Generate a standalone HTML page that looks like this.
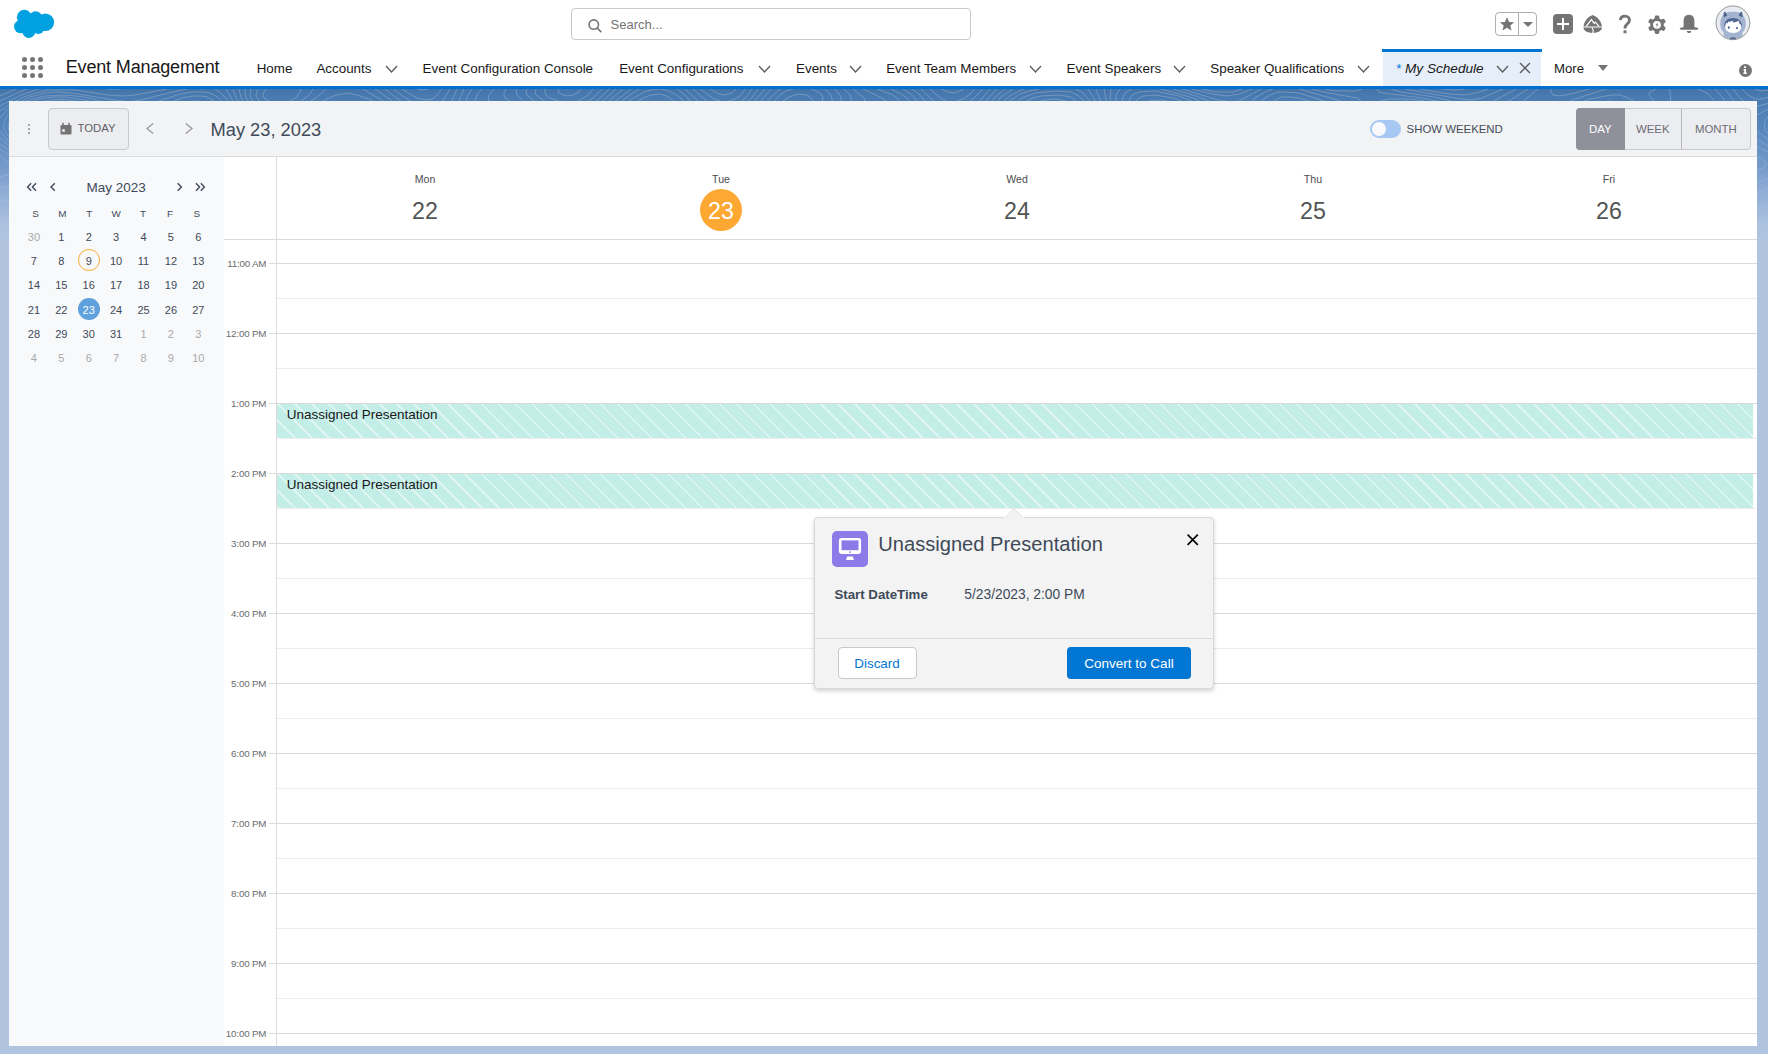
<!DOCTYPE html>
<html><head><meta charset="utf-8">
<style>
*{box-sizing:border-box;margin:0;padding:0}
html,body{width:1768px;height:1054px;overflow:hidden;background:#b0c4df;font-family:"Liberation Sans",sans-serif;color:#181818}
.abs{position:absolute}
svg.abs{overflow:visible}
.t{position:absolute;white-space:nowrap;line-height:1}
</style></head><body>
<div class="abs" style="left:0px;top:0px;width:1768px;height:86px;background:#fff"></div>
<svg class="abs" style="left:0px;top:0px" width="70" height="48" viewBox="0 0 70 48"><g fill="#00a1e0"><circle cx="24.3" cy="17.2" r="7.4"/><circle cx="35.6" cy="17.6" r="6.4"/><circle cx="45.3" cy="22.2" r="8.8"/><circle cx="20.6" cy="26.6" r="6.6"/><circle cx="28.8" cy="31.4" r="6.5"/><circle cx="38.4" cy="28.2" r="5.8"/><rect x="20" y="17" width="26" height="14"/></g></svg>
<div class="abs" style="left:571px;top:8px;width:400px;height:32px;border:1px solid #c9c9c9;border-radius:4px;background:#fff"></div>
<svg class="abs" style="left:586px;top:17px" width="18" height="18" viewBox="0 0 18 18"><circle cx="7.8" cy="7.6" r="4.7" fill="none" stroke="#747474" stroke-width="1.6"/><line x1="11.2" y1="11" x2="14.8" y2="14.6" stroke="#747474" stroke-width="1.7" stroke-linecap="round"/></svg>
<div class="t" style="left:610.60px;top:17.90px;font-size:13px;color:#747474;font-weight:400;font-style:normal;">Search...</div>
<div class="abs" style="left:1495px;top:12px;width:42px;height:24px;border:1px solid #b0adab;border-radius:4px;background:#fff"></div>
<div class="abs" style="left:1518px;top:13px;width:1px;height:22px;background:#b0adab"></div>
<svg class="abs" style="left:1499px;top:16px" width="16" height="16" viewBox="0 0 16 16"><polygon fill="#747474" points="8,1.2 10.1,5.9 15.1,6.2 11.3,9.5 12.5,14.5 8,11.8 3.5,14.5 4.7,9.5 0.9,6.2 5.9,5.9"/></svg>
<svg class="abs" style="left:1522px;top:21px" width="12" height="7" viewBox="0 0 12 7"><polygon fill="#747474" points="1,1 11,1 6,6"/></svg>
<div class="abs" style="left:1553px;top:14px;width:20px;height:20px;background:#747474;border-radius:4px"></div>
<div class="abs" style="left:1557px;top:23px;width:12px;height:2px;background:#fff"></div>
<div class="abs" style="left:1562px;top:18px;width:2px;height:12px;background:#fff"></div>
<svg class="abs" style="left:1583px;top:14px" width="20" height="20" viewBox="0 0 20 20"><path fill="#747474" d="M0.6,12.6 C0.8,8 4,3.2 9.6,1 C15.4,3.2 18.6,8 18.8,12.6 Z"/><path fill="#747474" d="M0.4,13.6 L19,13.6 C18.8,16.8 15,19 9.7,19 C4.4,19 0.6,16.8 0.4,13.6 Z"/><path fill="none" stroke="#fff" stroke-width="1.2" stroke-linejoin="miter" d="M3.2,12.4 L8.4,5.6 L11.2,9.4 L12.4,8.2 L16,12.4"/><path fill="none" stroke="#fff" stroke-width="1.1" d="M8.9,13.6 L10.3,16.3 L9.6,19.2"/></svg>
<svg class="abs" style="left:1617px;top:14px" width="16" height="20" viewBox="0 0 16 20"><path fill="none" stroke="#747474" stroke-width="2.9" stroke-linecap="butt" d="M3.4,6.2 C3.6,3.3 5.6,2.1 8,2.1 C10.6,2.1 12.5,3.8 12.5,6.1 C12.5,8.4 11,9.3 9.6,10.6 C8.5,11.6 8,12.6 8,14.4"/><rect x="6.5" y="16.3" width="3" height="3" rx="0.6" fill="#747474"/></svg>
<svg class="abs" style="left:1647px;top:15px" width="20" height="20" viewBox="0 0 20 20"><g fill="#747474"><circle cx="10" cy="9.8" r="6.8"/><rect x="7.7" y="0.6" width="4.6" height="4.2" rx="1.4" transform="rotate(0 10 9.8)"/><rect x="7.7" y="0.6" width="4.6" height="4.2" rx="1.4" transform="rotate(60 10 9.8)"/><rect x="7.7" y="0.6" width="4.6" height="4.2" rx="1.4" transform="rotate(120 10 9.8)"/><rect x="7.7" y="0.6" width="4.6" height="4.2" rx="1.4" transform="rotate(180 10 9.8)"/><rect x="7.7" y="0.6" width="4.6" height="4.2" rx="1.4" transform="rotate(240 10 9.8)"/><rect x="7.7" y="0.6" width="4.6" height="4.2" rx="1.4" transform="rotate(300 10 9.8)"/></g><circle cx="10" cy="9.8" r="3.9" fill="#fff"/><path fill="#747474" d="M10.7,7.2 L8.6,10.3 L10,10.3 L9.3,12.6 L11.5,9.5 L10.1,9.5 Z"/></svg>
<svg class="abs" style="left:1679px;top:14px" width="20" height="20" viewBox="0 0 20 20"><path fill="#747474" d="M10,0.8 C6.2,0.8 4.6,3.6 4.6,7 L4.6,12.2 C4.6,13 4,13.3 2.6,13.6 C1.3,13.9 0.8,14.3 0.8,14.8 C0.8,15.4 1.3,15.7 2.2,15.7 L17.8,15.7 C18.7,15.7 19.2,15.4 19.2,14.8 C19.2,14.3 18.7,13.9 17.4,13.6 C16,13.3 15.4,13 15.4,12.2 L15.4,7 C15.4,3.6 13.8,0.8 10,0.8 Z"/><path fill="#747474" d="M7.8,17 L12.2,17 C12,18.4 11.2,19 10,19 C8.8,19 8,18.4 7.8,17 Z"/></svg>
<svg class="abs" style="left:1715px;top:5px" width="36" height="36" viewBox="0 0 36 36"><defs><clipPath id="avc"><circle cx="17.9" cy="17.8" r="16.4"/></clipPath></defs><circle cx="17.9" cy="17.8" r="16.9" fill="#e8ecf2" stroke="#8a8a8a" stroke-width="0.9"/><g clip-path="url(#avc)"><path fill="#a3b4d1" d="M8.6,27.5 C6.5,25.5 5.2,22.5 5.2,18.8 C5.2,14 7,10.5 9.8,8.4 C12.4,7.2 15,6.8 18,6.8 C21,6.8 23.6,7.2 26.2,8.4 C29,10.5 30.8,14 30.8,18.8 C30.8,22.5 29.5,25.5 27.4,27.5 L27.6,36 L8.4,36 Z"/><path fill="#4f6792" d="M8.6,12.2 C8.2,9.5 8.6,7.5 9.6,6.4 C11,7.2 12,8.8 12.2,10.8 Z"/><path fill="#4f6792" d="M27.4,12.2 C27.8,9.5 27.4,7.5 26.4,6.4 C25,7.2 24,8.8 23.8,10.8 Z"/><path fill="#4f6792" d="M9.2,21.5 C9,16 12.6,13 18,13 C23.4,13 27,16 26.8,21.5 Z"/><path fill="#ffffff" d="M10.2,21.8 C10.2,19.6 10.8,18.2 11.8,17.4 L12.4,18.6 L13.6,16.6 C15,17 16.6,16.6 18.2,15.6 L17.6,17.6 C20,17.4 22.6,16.6 23.6,15.8 L24.4,18.6 C25.6,19.2 26.2,20.4 26.2,21.8 C26.2,25.8 22.8,28 18.2,28 C13.6,28 10.2,25.8 10.2,21.8 Z"/><ellipse cx="13.8" cy="22.6" rx="1" ry="1.4" fill="#4f6792"/><ellipse cx="22" cy="23.1" rx="1" ry="1.2" fill="#4f6792"/><ellipse cx="18" cy="34.2" rx="3.2" ry="2" fill="#4f6792"/></g></svg>
<div class="abs" style="left:22.2px;top:57.2px;width:5.2px;height:5.2px;border-radius:50%;background:#747474"></div>
<div class="abs" style="left:22.2px;top:65.0px;width:5.2px;height:5.2px;border-radius:50%;background:#747474"></div>
<div class="abs" style="left:22.2px;top:72.8px;width:5.2px;height:5.2px;border-radius:50%;background:#747474"></div>
<div class="abs" style="left:30.0px;top:57.2px;width:5.2px;height:5.2px;border-radius:50%;background:#747474"></div>
<div class="abs" style="left:30.0px;top:65.0px;width:5.2px;height:5.2px;border-radius:50%;background:#747474"></div>
<div class="abs" style="left:30.0px;top:72.8px;width:5.2px;height:5.2px;border-radius:50%;background:#747474"></div>
<div class="abs" style="left:37.8px;top:57.2px;width:5.2px;height:5.2px;border-radius:50%;background:#747474"></div>
<div class="abs" style="left:37.8px;top:65.0px;width:5.2px;height:5.2px;border-radius:50%;background:#747474"></div>
<div class="abs" style="left:37.8px;top:72.8px;width:5.2px;height:5.2px;border-radius:50%;background:#747474"></div>
<div class="t" style="left:65.70px;top:58.16px;font-size:18px;color:#181818;font-weight:400;font-style:normal;letter-spacing:-0.15px;">Event Management</div>
<div class="t" style="left:256.70px;top:62.26px;font-size:13.4px;color:#181818;font-weight:400;font-style:normal;">Home</div>
<div class="t" style="left:316.40px;top:62.26px;font-size:13.4px;color:#181818;font-weight:400;font-style:normal;">Accounts</div>
<svg class="abs" style="left:384.5px;top:64.6px" width="13" height="8" viewBox="0 0 13 8"><polyline points="1,1 6.5,7 12,1" fill="none" stroke="#5c5c5c" stroke-width="1.3"/></svg>
<div class="t" style="left:422.60px;top:62.26px;font-size:13.4px;color:#181818;font-weight:400;font-style:normal;">Event Configuration Console</div>
<div class="t" style="left:619.20px;top:62.26px;font-size:13.4px;color:#181818;font-weight:400;font-style:normal;">Event Configurations</div>
<svg class="abs" style="left:758.2px;top:64.6px" width="13" height="8" viewBox="0 0 13 8"><polyline points="1,1 6.5,7 12,1" fill="none" stroke="#5c5c5c" stroke-width="1.3"/></svg>
<div class="t" style="left:796.00px;top:62.26px;font-size:13.4px;color:#181818;font-weight:400;font-style:normal;">Events</div>
<svg class="abs" style="left:848.8px;top:64.6px" width="13" height="8" viewBox="0 0 13 8"><polyline points="1,1 6.5,7 12,1" fill="none" stroke="#5c5c5c" stroke-width="1.3"/></svg>
<div class="t" style="left:886.20px;top:62.26px;font-size:13.4px;color:#181818;font-weight:400;font-style:normal;">Event Team Members</div>
<svg class="abs" style="left:1029.0px;top:64.6px" width="13" height="8" viewBox="0 0 13 8"><polyline points="1,1 6.5,7 12,1" fill="none" stroke="#5c5c5c" stroke-width="1.3"/></svg>
<div class="t" style="left:1066.60px;top:62.26px;font-size:13.4px;color:#181818;font-weight:400;font-style:normal;">Event Speakers</div>
<svg class="abs" style="left:1172.9px;top:64.6px" width="13" height="8" viewBox="0 0 13 8"><polyline points="1,1 6.5,7 12,1" fill="none" stroke="#5c5c5c" stroke-width="1.3"/></svg>
<div class="t" style="left:1210.30px;top:62.26px;font-size:13.4px;color:#181818;font-weight:400;font-style:normal;">Speaker Qualifications</div>
<svg class="abs" style="left:1357.4px;top:64.6px" width="13" height="8" viewBox="0 0 13 8"><polyline points="1,1 6.5,7 12,1" fill="none" stroke="#5c5c5c" stroke-width="1.3"/></svg>
<div class="abs" style="left:1383px;top:52px;width:158px;height:34px;background:#e5eef9"></div>
<div class="abs" style="left:1382px;top:49px;width:160px;height:3px;background:#0176d3"></div>
<div class="t" style="left:1395.80px;top:62.26px;font-size:13.4px;color:#0176d3;font-weight:400;font-style:italic;">*</div>
<div class="t" style="left:1405.00px;top:62.09px;font-size:13.6px;color:#181818;font-weight:400;font-style:italic;">My Schedule</div>
<svg class="abs" style="left:1495.5px;top:64.6px" width="13" height="8" viewBox="0 0 13 8"><polyline points="1,1 6.5,7 12,1" fill="none" stroke="#5c5c5c" stroke-width="1.3"/></svg>
<svg class="abs" style="left:1519px;top:62px" width="12" height="12" viewBox="0 0 12 12"><path d="M1,1 L11,11 M11,1 L1,11" stroke="#5c5c5c" stroke-width="1.4"/></svg>
<div class="t" style="left:1554.00px;top:62.43px;font-size:13.2px;color:#181818;font-weight:400;font-style:normal;">More</div>
<svg class="abs" style="left:1597px;top:64px" width="12" height="8" viewBox="0 0 12 8"><polygon fill="#747474" points="1,1 11,1 6,7"/></svg>
<div class="abs" style="left:1738.5px;top:63.5px;width:13px;height:13px;border-radius:50%;background:#747474"></div>
<svg class="abs" style="left:1738px;top:63px" width="14" height="14" viewBox="0 0 14 14"><circle cx="7" cy="4.2" r="1.1" fill="#fff"/><path d="M5.6,6 L8,6 L8,9.6 L8.8,9.6 L8.8,10.9 L5.4,10.9 L5.4,9.6 L6.2,9.6 L6.2,7.3 L5.6,7.3 Z" fill="#fff"/></svg>
<div class="abs" style="left:0px;top:86px;width:1768px;height:3px;background:#016ed1"></div>
<div class="abs" style="left:0px;top:89px;width:1768px;height:965px;background:linear-gradient(#4474a9 0px,#4b7db4 12px,#5887bd 40px,#7399c9 75px,#97b2d8 110px,#abc1de 135px,#b0c4df 150px,#b0c4df 965px)"></div>
<svg class="abs" style="left:0;top:89px" width="1768" height="150" viewBox="0 0 1768 150"><defs><linearGradient id="tg" x1="0" y1="0" x2="0" y2="1"><stop offset="0" stop-color="#fff" stop-opacity="1"/><stop offset="0.55" stop-color="#fff" stop-opacity="0.6"/><stop offset="1" stop-color="#fff" stop-opacity="0"/></linearGradient><mask id="tm"><rect width="1768" height="150" fill="url(#tg)"/></mask></defs><g mask="url(#tm)" fill="none" stroke="#ffffff" stroke-opacity="0.24" stroke-width="1"><path d="M1174,39 L1183,36 L1189,30 L1189,24 L1188,21 L1184,18 L1173,13 L1161,11 L1149,12 L1144,15 L1142,18 L1143,24 L1146,29 L1150,33 L1155,36 L1161,38 L1167,39 L1174,39"/><path d="M941,0 L948,3 L954,4 L960,2 L964,0"/><path d="M1441,0 L1455,1 L1465,0"/><path d="M1184,42 L1193,36 L1197,30 L1197,27 L1196,21 L1189,15 L1173,9 L1155,6 L1143,7 L1139,9 L1136,12 L1135,18 L1137,26 L1142,33 L1149,39 L1158,42 L1167,44 L1176,44 L1184,42"/><path d="M930,0 L942,10 L948,13 L954,13 L963,10 L969,6 L975,0"/><path d="M1183,48 L1188,46 L1195,42 L1201,36 L1204,30 L1204,24 L1203,21 L1197,15 L1191,12 L1179,7 L1155,2 L1139,3 L1132,6 L1130,9 L1128,15 L1130,24 L1135,33 L1143,40 L1152,45 L1164,49 L1173,49 L1183,48"/><path d="M1420,0 L1449,5 L1464,6 L1476,4 L1488,0"/><path d="M1323,27 L1324,24 L1323,21 L1320,18 L1309,12 L1299,9 L1290,8 L1281,8 L1274,12 L1272,15 L1273,18 L1276,21 L1281,24 L1290,27 L1311,30 L1317,29 L1323,27"/><path d="M104,69 L114,65 L142,48 L150,42 L151,39 L146,36 L93,18 L78,14 L63,12 L48,13 L36,16 L24,23 L18,30 L16,36 L17,39 L19,45 L29,54 L42,61 L60,68 L78,71 L93,71 L104,69"/><path d="M559,0 L558,3 L561,5 L567,7 L573,6 L579,3 L581,0"/><path d="M921,0 L939,17 L945,20 L954,22 L960,21 L966,17 L983,0"/><path d="M1132,0 L1126,3 L1124,6 L1122,12 L1123,18 L1125,25 L1129,33 L1134,39 L1140,44 L1146,47 L1155,51 L1173,54 L1185,53 L1191,51 L1197,48 L1206,39 L1211,30 L1212,24 L1209,18 L1203,14 L1193,9 L1176,4 L1160,0"/><path d="M1331,42 L1335,39 L1338,36 L1341,30 L1341,24 L1339,21 L1337,18 L1324,12 L1299,4 L1284,3 L1278,3 L1270,6 L1265,9 L1262,12 L1261,15 L1261,18 L1263,21 L1267,24 L1275,28 L1320,42 L1326,43 L1331,42"/><path d="M1405,0 L1455,9 L1470,11 L1482,9 L1503,0"/><path d="M263,123 L270,119 L276,114 L282,108 L288,100 L305,63 L306,57 L304,54 L300,51 L292,48 L258,41 L240,35 L229,30 L213,18 L204,13 L195,12 L186,13 L177,16 L159,25 L153,26 L144,27 L126,25 L75,12 L63,10 L51,11 L39,13 L27,18 L19,24 L15,28 L13,33 L13,39 L15,45 L21,51 L33,59 L45,65 L57,69 L72,73 L90,76 L102,76 L108,75 L133,60 L150,53 L165,52 L177,54 L186,59 L192,65 L210,93 L222,107 L234,118 L240,123 L249,125 L255,125 L263,123"/><path d="M545,0 L545,3 L546,6 L550,9 L558,12 L567,14 L576,13 L582,10 L588,6 L593,0"/><path d="M912,0 L920,6 L933,23 L939,28 L945,32 L954,33 L960,32 L966,28 L990,0"/><path d="M1120,0 L1116,6 L1116,12 L1117,18 L1124,33 L1128,40 L1133,45 L1146,53 L1161,58 L1176,61 L1188,60 L1197,56 L1203,51 L1209,45 L1219,30 L1221,24 L1221,21 L1218,18 L1209,12 L1193,6 L1173,0"/><path d="M1273,0 L1265,3 L1255,9 L1250,15 L1250,18 L1251,21 L1260,27 L1299,41 L1323,54 L1332,54 L1338,51 L1344,44 L1349,33 L1351,24 L1350,18 L1348,15 L1341,12 L1299,0"/><path d="M1391,0 L1401,3 L1434,8 L1467,16 L1476,17 L1482,17 L1488,15 L1516,0"/><path d="M142,153 L143,147 L141,129 L144,108 L144,102 L142,96 L139,93 L126,81 L125,78 L125,75 L127,72 L134,66 L147,61 L159,58 L171,59 L180,63 L189,71 L204,93 L228,124 L234,130 L240,134 L249,138 L258,139 L267,139 L273,138 L275,135 L279,126 L292,105 L304,78 L317,57 L318,54 L317,51 L312,48 L306,46 L267,40 L246,34 L232,27 L213,11 L207,8 L201,7 L192,7 L182,9 L153,20 L141,22 L123,20 L84,11 L66,8 L54,8 L45,9 L36,11 L27,15 L17,21 L11,27 L10,30 L8,36 L9,42 L14,48 L20,54 L36,64 L54,71 L84,80 L93,84 L94,87 L94,93 L86,117 L84,129 L86,135 L88,141 L99,153"/><path d="M1623,45 L1631,42 L1635,39 L1637,36 L1638,30 L1636,24 L1634,21 L1629,17 L1623,14 L1611,12 L1596,13 L1582,18 L1575,24 L1573,27 L1575,33 L1582,39 L1588,42 L1596,45 L1605,46 L1614,46 L1623,45"/><path d="M324,153 L318,146 L302,135 L297,130 L295,126 L294,123 L295,117 L305,87 L309,78 L314,72 L321,65 L330,59 L339,56 L351,54 L357,52 L358,51 L358,48 L355,45 L342,41 L288,40 L273,39 L258,36 L246,31 L238,27 L230,21 L216,7 L210,4 L204,3 L192,3 L180,5 L147,16 L135,17 L117,16 L84,8 L66,6 L45,7 L36,9 L27,12 L17,18 L7,27 L4,33 L4,39 L5,42 L9,48 L15,53 L30,63 L45,70 L76,81 L81,84 L85,87 L86,90 L87,96 L80,120 L79,132 L82,141 L92,153"/><path d="M536,0 L535,3 L536,6 L544,12 L555,17 L567,19 L576,18 L585,14 L593,9 L602,0"/><path d="M903,0 L912,6 L917,12 L922,21 L927,38 L930,42 L938,45 L951,46 L962,45 L969,42 L973,36 L980,21 L986,12 L997,0"/><path d="M1111,0 L1110,9 L1113,21 L1121,39 L1128,49 L1135,54 L1146,59 L1176,70 L1185,72 L1194,70 L1200,67 L1206,61 L1219,42 L1227,33 L1233,29 L1239,28 L1248,29 L1290,43 L1300,48 L1314,58 L1320,61 L1329,62 L1338,59 L1347,51 L1352,42 L1360,21 L1362,15 L1361,12 L1357,9 L1329,4 L1312,0"/><path d="M1261,0 L1239,12 L1230,13 L1218,11 L1182,0"/><path d="M1377,0 L1379,3 L1383,4 L1422,9 L1446,14 L1467,21 L1485,30 L1488,30 L1493,24 L1504,15 L1528,0"/><path d="M1626,48 L1635,45 L1641,42 L1646,36 L1647,30 L1645,24 L1641,18 L1635,13 L1626,8 L1620,6 L1611,6 L1590,10 L1575,16 L1569,20 L1566,24 L1565,27 L1568,33 L1574,39 L1584,44 L1593,47 L1605,49 L1617,49 L1626,48"/><path d="M15,153 L6,153"/><path d="M187,0 L168,4 L141,11 L129,13 L114,11 L72,4 L57,3 L45,4 L30,8 L18,14 L7,21 L0,29"/><path d="M337,153 L330,145 L313,129 L309,123 L307,117 L308,108 L309,96 L311,87 L314,81 L318,76 L324,71 L330,68 L336,66 L345,65 L369,66 L375,64 L378,60 L380,54 L378,49 L376,45 L372,41 L366,37 L360,35 L351,33 L336,33 L306,37 L291,38 L276,37 L261,34 L249,30 L239,24 L233,18 L222,5 L215,0"/><path d="M527,0 L526,3 L527,6 L534,12 L552,20 L561,23 L567,23 L576,22 L588,18 L597,12 L609,0"/><path d="M710,0 L717,4 L723,6 L729,5 L732,4 L736,0"/><path d="M891,0 L903,6 L907,9 L911,15 L912,21 L912,25 L910,30 L906,33 L900,36 L894,36 L858,36 L846,38 L834,42 L813,50 L800,57 L792,63 L786,72 L783,84 L783,96 L787,108 L794,123 L798,129 L803,135 L822,147 L830,153"/><path d="M945,153 L921,146 L906,140 L891,133 L882,126 L876,119 L872,111 L871,102 L874,90 L878,81 L885,74 L894,67 L906,62 L924,58 L966,55 L979,51 L983,48 L984,45 L985,27 L988,18 L994,9 L1005,0"/><path d="M1104,0 L1107,15 L1120,54 L1122,57 L1128,61 L1146,69 L1150,72 L1153,75 L1153,78 L1152,80 L1149,82 L1143,83 L1134,82 L1125,78 L1113,67 L1104,64 L1095,63 L1080,63 L1071,64 L1065,66 L1064,69 L1065,72 L1075,84 L1077,90 L1077,96 L1075,99 L1065,104 L1038,114 L1024,120 L1015,126 L993,143 L977,153"/><path d="M1252,0 L1239,5 L1227,7 L1212,5 L1192,0"/><path d="M1362,0 L1356,2 L1347,2 L1335,2 L1325,0"/><path d="M1319,153 L1302,146 L1279,129 L1269,125 L1254,123 L1221,125 L1212,123 L1206,119 L1201,111 L1199,102 L1198,96 L1199,90 L1202,84 L1214,69 L1224,48 L1230,41 L1236,38 L1245,36 L1254,37 L1269,41 L1281,45 L1290,49 L1314,66 L1322,69 L1329,69 L1338,66 L1347,59 L1355,48 L1368,21 L1371,17 L1377,13 L1389,10 L1410,10 L1431,13 L1450,18 L1458,22 L1466,27 L1469,30 L1471,36 L1465,60 L1463,84 L1461,90 L1458,95 L1452,99 L1446,100 L1419,99 L1404,99 L1394,102 L1389,105 L1387,108 L1389,111 L1393,114 L1404,118 L1425,121 L1440,121 L1446,119 L1464,112 L1485,109 L1494,108 L1500,105 L1506,99 L1509,93 L1514,81 L1517,72 L1518,63 L1516,48 L1510,30 L1511,24 L1516,18 L1538,0"/><path d="M1606,0 L1575,10 L1564,15 L1556,21 L1555,24 L1557,30 L1562,36 L1572,42 L1581,46 L1593,49 L1605,51 L1617,52 L1628,51 L1638,49 L1647,45 L1652,42 L1655,39 L1658,33 L1660,27 L1660,21 L1649,6 L1650,3 L1656,0"/><path d="M1669,0 L1670,3 L1671,15 L1674,21 L1681,27 L1689,32 L1695,34 L1701,34 L1707,33 L1713,30 L1716,27 L1718,21 L1717,15 L1712,9 L1707,4 L1698,0"/><path d="M0,42 L7,51 L24,63 L39,71 L69,82 L76,87 L79,90 L81,96 L80,102 L73,126 L73,135 L73,138 L76,144 L85,153"/><path d="M1770,147 L1755,152 L1740,152 L1728,149 L1698,138 L1683,135 L1674,137 L1665,141 L1656,147 L1651,153"/><path d="M35,153 L33,148 L30,145 L21,141 L12,141 L0,146"/><path d="M167,0 L135,6 L123,7 L108,6 L75,1 L60,1 L48,1 L36,4 L24,8 L12,14 L0,22"/><path d="M463,153 L459,144 L453,137 L446,132 L420,118 L411,112 L399,102 L385,87 L383,81 L390,66 L391,60 L390,54 L388,48 L384,42 L374,33 L368,30 L360,27 L345,26 L333,27 L294,34 L279,34 L267,33 L252,28 L241,21 L233,12 L226,0"/><path d="M517,0 L516,3 L517,6 L523,12 L552,25 L561,28 L567,29 L579,26 L591,21 L603,12 L616,0"/><path d="M700,0 L714,10 L723,13 L729,12 L735,10 L741,6 L745,0"/><path d="M877,0 L891,5 L897,9 L900,13 L901,18 L901,21 L899,24 L894,27 L888,28 L861,31 L846,34 L810,48 L792,57 L783,66 L780,72 L777,81 L776,96 L779,117 L777,123 L772,126 L756,129 L744,133 L723,144 L709,153"/><path d="M1096,0 L1104,21 L1108,36 L1108,45 L1104,51 L1098,54 L1086,55 L1044,56 L1030,57 L1030,60 L1056,77 L1060,81 L1064,87 L1065,93 L1063,96 L1055,102 L1021,117 L993,136 L984,142 L975,145 L966,147 L957,148 L945,146 L918,140 L900,132 L891,126 L884,120 L880,114 L878,108 L877,102 L877,96 L879,90 L883,84 L888,79 L894,75 L903,70 L915,67 L930,65 L975,61 L996,57 L1003,54 L1004,51 L994,36 L993,30 L993,24 L996,15 L1000,9 L1005,5 L1013,0"/><path d="M1242,0 L1233,3 L1224,3 L1215,3 L1202,0"/><path d="M1589,0 L1575,4 L1560,7 L1553,6 L1551,3 L1551,0"/><path d="M1333,153 L1320,149 L1309,144 L1300,138 L1287,126 L1278,121 L1263,117 L1230,114 L1224,112 L1218,108 L1215,104 L1213,99 L1214,90 L1224,70 L1231,54 L1236,48 L1242,44 L1251,43 L1260,44 L1272,47 L1287,53 L1311,71 L1320,75 L1329,76 L1335,74 L1341,71 L1350,63 L1358,51 L1370,27 L1375,21 L1380,17 L1392,13 L1407,12 L1425,14 L1443,18 L1452,22 L1459,27 L1461,30 L1464,36 L1464,42 L1459,75 L1458,81 L1455,87 L1449,92 L1443,94 L1407,95 L1389,98 L1379,102 L1376,105 L1375,108 L1376,111 L1380,114 L1397,120 L1428,126 L1440,127 L1449,127 L1458,125 L1473,120 L1500,114 L1506,111 L1509,108 L1514,99 L1521,75 L1526,39 L1530,33 L1533,32 L1536,31 L1542,32 L1570,45 L1584,50 L1596,52 L1608,54 L1623,54 L1665,51 L1671,52 L1680,58 L1686,60 L1692,58 L1720,39 L1725,35 L1729,30 L1730,24 L1729,18 L1723,9 L1715,0"/><path d="M1770,25 L1766,30 L1764,36 L1766,42 L1770,46"/><path d="M0,49 L12,59 L27,68 L39,74 L63,84 L72,90 L75,96 L75,105 L71,117 L62,135 L61,141 L63,144 L76,153"/><path d="M49,153 L50,147 L50,144 L48,141 L36,135 L21,130 L12,129 L6,130 L0,134"/><path d="M1770,137 L1764,141 L1755,146 L1749,147 L1740,147 L1725,144 L1695,132 L1686,131 L1680,131 L1671,133 L1662,137 L1653,144 L1644,153"/><path d="M39,0 L21,6 L0,17"/><path d="M120,0 L107,0"/><path d="M472,153 L468,138 L465,133 L459,130 L435,121 L423,115 L410,105 L402,96 L398,90 L397,84 L397,78 L400,63 L398,54 L395,48 L389,39 L384,33 L378,28 L372,25 L363,21 L348,19 L333,21 L306,29 L294,31 L279,32 L267,30 L252,25 L243,18 L236,9 L233,0"/><path d="M506,0 L504,3 L504,6 L505,9 L510,12 L543,27 L551,33 L552,36 L548,39 L542,42 L516,52 L509,57 L504,62 L500,69 L497,93 L493,102 L483,117 L481,123 L481,126 L486,130 L517,141 L527,147 L534,153"/><path d="M555,153 L570,141 L589,129 L633,106 L663,93 L668,90 L675,84 L678,78 L685,57 L684,53 L681,52 L676,54 L670,66 L663,73 L657,76 L651,78 L639,78 L624,74 L609,66 L583,48 L576,42 L574,39 L574,36 L578,33 L602,18 L623,0"/><path d="M693,0 L711,16 L717,18 L723,19 L732,17 L741,13 L747,7 L752,0"/><path d="M863,0 L882,9 L886,12 L887,15 L885,18 L878,21 L858,25 L843,30 L802,48 L785,57 L778,63 L773,72 L768,87 L764,108 L761,114 L754,120 L710,147 L702,153"/><path d="M1088,0 L1092,6 L1098,18 L1101,30 L1101,39 L1098,44 L1092,48 L1083,50 L1071,51 L1050,49 L1023,46 L1011,42 L1004,36 L1001,33 L999,27 L999,21 L1002,15 L1007,9 L1011,6 L1024,0"/><path d="M1770,19 L1755,27 L1749,29 L1743,24 L1725,0"/><path d="M1513,153 L1503,147 L1478,138 L1475,135 L1477,132 L1482,129 L1491,127 L1509,123 L1515,120 L1517,117 L1519,111 L1522,90 L1530,57 L1533,50 L1536,46 L1539,44 L1545,43 L1551,43 L1584,52 L1602,56 L1650,59 L1659,63 L1674,77 L1677,78 L1683,80 L1689,79 L1695,76 L1701,71 L1713,57 L1720,51 L1731,43 L1743,37 L1749,36 L1752,38 L1770,52"/><path d="M0,55 L27,72 L54,84 L63,89 L67,93 L68,96 L69,102 L67,111 L63,119 L57,126 L51,128 L45,128 L36,126 L27,123 L9,113 L3,111 L0,112"/><path d="M1770,113 L1767,117 L1760,132 L1755,137 L1749,141 L1740,142 L1731,141 L1722,138 L1695,126 L1686,124 L1680,124 L1671,127 L1662,132 L1650,141 L1637,153"/><path d="M27,0 L15,5 L0,12"/><path d="M494,0 L489,6 L488,9 L489,12 L492,15 L525,24 L535,30 L538,33 L537,36 L534,39 L510,51 L501,57 L498,61 L495,66 L493,90 L490,96 L487,102 L480,109 L471,117 L465,120 L456,121 L444,119 L432,115 L421,108 L411,99 L407,93 L406,87 L405,81 L408,66 L408,60 L406,54 L399,42 L392,33 L384,25 L375,20 L360,14 L345,13 L333,15 L309,24 L297,27 L285,29 L273,29 L258,25 L248,18 L241,9 L239,0"/><path d="M567,153 L574,144 L581,138 L601,126 L633,110 L665,99 L677,93 L687,84 L695,69 L699,57 L700,48 L698,42 L696,39 L693,38 L687,38 L681,39 L672,43 L666,48 L660,60 L656,66 L651,70 L642,73 L630,72 L618,67 L601,57 L589,48 L585,42 L584,39 L585,36 L588,33 L608,18 L631,0"/><path d="M685,0 L695,9 L705,21 L711,25 L717,26 L729,24 L741,18 L750,11 L758,0"/><path d="M853,0 L864,9 L865,12 L863,15 L859,18 L828,33 L786,51 L776,57 L770,63 L767,69 L751,105 L743,117 L734,126 L726,132 L703,147 L695,153"/><path d="M1076,0 L1083,4 L1090,12 L1094,24 L1095,33 L1092,39 L1088,42 L1080,45 L1068,46 L1047,44 L1026,41 L1014,36 L1008,30 L1006,27 L1006,21 L1008,15 L1010,12 L1020,5 L1029,2 L1039,0"/><path d="M1770,14 L1758,17 L1749,16 L1740,9 L1733,0"/><path d="M1566,153 L1554,145 L1541,132 L1533,120 L1529,108 L1528,99 L1528,90 L1533,68 L1537,57 L1540,54 L1545,50 L1551,49 L1560,50 L1593,57 L1632,61 L1644,64 L1654,69 L1674,94 L1680,98 L1683,99 L1689,98 L1698,91 L1707,81 L1722,61 L1728,56 L1734,52 L1743,49 L1749,49 L1758,51 L1770,58"/><path d="M0,60 L24,76 L36,82 L48,87 L57,92 L61,96 L62,99 L62,105 L60,111 L54,118 L48,120 L42,120 L36,118 L30,114 L18,104 L12,100 L6,98 L0,98"/><path d="M1770,98 L1759,102 L1753,108 L1750,114 L1749,126 L1746,131 L1743,133 L1734,134 L1724,132 L1711,126 L1689,113 L1683,112 L1680,113 L1671,118 L1627,153"/><path d="M16,0 L0,7"/><path d="M482,0 L477,6 L475,12 L477,18 L480,21 L489,24 L507,26 L516,28 L521,30 L524,33 L523,36 L520,39 L501,49 L495,54 L492,58 L489,66 L488,84 L487,90 L484,96 L480,102 L474,107 L468,111 L462,114 L453,115 L444,114 L435,111 L424,105 L418,99 L414,93 L413,87 L413,81 L417,66 L415,57 L408,45 L396,30 L387,21 L378,15 L369,10 L357,6 L348,4 L342,5 L333,7 L312,18 L297,24 L285,26 L273,26 L261,23 L252,17 L246,9 L245,3 L245,0"/><path d="M677,0 L685,6 L690,12 L693,18 L692,24 L687,28 L670,36 L663,41 L658,48 L651,60 L648,64 L644,66 L639,67 L630,67 L617,63 L602,54 L593,45 L592,39 L593,36 L599,30 L630,6 L639,0"/><path d="M575,153 L579,147 L584,141 L592,135 L606,127 L633,114 L671,102 L687,93 L694,87 L700,78 L707,63 L712,45 L715,39 L720,35 L735,28 L744,23 L753,14 L765,0"/><path d="M844,0 L850,6 L851,9 L851,12 L849,15 L841,21 L826,30 L807,39 L776,51 L766,57 L761,63 L745,90 L737,111 L731,120 L726,126 L719,132 L694,147 L688,153"/><path d="M1080,39 L1071,41 L1059,41 L1044,40 L1029,36 L1021,33 L1016,30 L1013,24 L1013,18 L1017,13 L1022,9 L1035,4 L1056,2 L1071,3 L1077,6 L1081,9 L1086,15 L1088,21 L1089,27 L1087,33 L1085,36 L1080,39"/><path d="M1770,8 L1761,10 L1755,10 L1748,6 L1742,0"/><path d="M1770,89 L1746,96 L1739,99 L1725,108 L1722,107 L1719,100 L1719,90 L1721,81 L1727,69 L1734,62 L1740,58 L1749,57 L1758,58 L1770,64"/><path d="M0,66 L10,75 L14,81 L14,84 L12,85 L0,88"/><path d="M326,0 L316,9 L303,17 L291,22 L279,23 L266,21 L259,18 L255,15 L252,11 L250,6 L251,0"/><path d="M472,0 L468,6 L466,12 L466,18 L468,21 L474,28 L480,32 L490,36 L494,39 L493,42 L484,54 L481,60 L480,66 L482,84 L480,93 L475,99 L467,105 L459,108 L450,109 L441,108 L435,106 L429,102 L423,96 L422,93 L420,87 L421,81 L426,69 L426,63 L421,54 L403,30 L396,22 L388,15 L363,0"/><path d="M642,60 L636,62 L630,63 L621,61 L613,57 L604,51 L600,45 L599,39 L600,36 L606,30 L630,11 L644,3 L651,1 L660,0 L669,2 L675,5 L681,9 L683,12 L684,18 L682,21 L680,24 L663,34 L657,39 L648,54 L642,60"/><path d="M581,153 L585,147 L590,141 L598,135 L609,129 L633,118 L663,110 L675,106 L688,99 L702,90 L708,84 L712,78 L723,51 L726,45 L750,25 L771,0"/><path d="M835,0 L840,6 L841,9 L841,12 L836,18 L828,24 L818,30 L804,37 L762,51 L753,57 L733,87 L731,93 L728,111 L723,120 L718,126 L711,132 L687,146 L681,153"/><path d="M1770,1 L1761,2 L1755,0"/><path d="M1068,36 L1050,36 L1032,32 L1023,27 L1021,24 L1020,21 L1021,18 L1023,15 L1027,12 L1033,9 L1041,7 L1059,6 L1071,8 L1076,12 L1079,15 L1081,18 L1082,24 L1081,30 L1078,33 L1068,36"/><path d="M1758,81 L1749,82 L1742,81 L1740,78 L1739,75 L1741,72 L1743,69 L1749,67 L1755,67 L1761,69 L1765,72 L1766,75 L1765,78 L1758,81"/><path d="M313,0 L309,6 L300,13 L289,18 L279,19 L267,17 L259,12 L256,6 L258,0"/><path d="M464,0 L460,9 L458,18 L461,27 L471,42 L471,48 L467,60 L466,63 L467,66 L473,78 L474,87 L472,93 L465,99 L459,102 L450,104 L441,102 L435,99 L432,96 L429,90 L429,86 L431,81 L439,69 L440,66 L440,63 L438,60 L423,45 L402,20 L392,12 L375,0"/><path d="M825,0 L831,6 L832,9 L832,12 L828,18 L816,27 L801,34 L783,39 L765,41 L756,40 L755,39 L754,36 L757,27 L770,9 L780,0"/><path d="M633,57 L624,57 L618,55 L611,51 L608,48 L606,44 L606,39 L608,36 L618,27 L638,12 L645,8 L652,6 L660,5 L666,7 L670,9 L673,12 L674,15 L674,18 L672,20 L654,33 L649,39 L642,51 L639,54 L633,57"/><path d="M1065,31 L1053,31 L1044,30 L1038,28 L1032,24 L1030,21 L1031,18 L1035,14 L1044,11 L1056,10 L1065,12 L1070,15 L1074,21 L1074,24 L1072,27 L1065,31"/><path d="M301,0 L300,3 L296,9 L288,13 L279,15 L270,13 L264,9 L263,6 L264,3 L266,0"/><path d="M457,0 L453,9 L450,18 L450,24 L453,36 L452,42 L449,45 L444,46 L438,44 L429,39 L408,18 L385,0"/><path d="M811,0 L818,3 L822,6 L823,9 L822,15 L816,21 L807,27 L792,33 L780,34 L770,33 L767,30 L766,27 L768,21 L772,15 L780,6 L786,2 L793,0"/><path d="M450,0 L438,20 L435,23 L432,24 L426,23 L420,19 L393,0"/><path d="M792,27 L783,27 L780,26 L778,24 L777,21 L778,18 L783,12 L789,8 L798,5 L807,6 L811,9 L813,12 L812,15 L810,18 L801,24 L792,27"/><path d="M442,0 L435,8 L432,10 L426,11 L417,9 L402,0"/><path d="M428,0 L423,1 L417,0"/></g></svg>
<div class="abs" style="left:9px;top:101px;width:1748px;height:945px;background:#fff"></div>
<div class="abs" style="left:9px;top:101px;width:1748px;height:55px;background:#f2f3f5"></div>
<div class="abs" style="left:9px;top:156px;width:1748px;height:1px;background:#dcdcdc"></div>
<div class="abs" style="left:9px;top:157px;width:215px;height:889px;background:#f8f9fb"></div>
<div class="abs" style="left:27.5px;top:124.0px;width:2.4px;height:2.4px;border-radius:50%;background:#8c8c8c"></div>
<div class="abs" style="left:27.5px;top:127.8px;width:2.4px;height:2.4px;border-radius:50%;background:#8c8c8c"></div>
<div class="abs" style="left:27.5px;top:131.6px;width:2.4px;height:2.4px;border-radius:50%;background:#8c8c8c"></div>
<div class="abs" style="left:48px;top:108px;width:81px;height:42px;border:1px solid #c9c9cc;border-radius:4px;background:#ecedf0"></div>
<svg class="abs" style="left:60px;top:122px" width="12" height="13" viewBox="0 0 12 13"><rect x="0.5" y="3" width="11" height="9.5" rx="1.2" fill="#747474"/><rect x="2.2" y="0.8" width="1.6" height="3" fill="#747474"/><rect x="8.2" y="0.8" width="1.6" height="3" fill="#747474"/><rect x="2.2" y="7.2" width="2.6" height="2.6" fill="#ecedf0"/></svg>
<div class="t" style="left:77.40px;top:123.35px;font-size:11.4px;color:#5e6066;font-weight:400;font-style:normal;">TODAY</div>
<svg class="abs" style="left:145px;top:122px" width="10" height="13" viewBox="0 0 10 13"><polyline points="8.2,1.5 2,6.5 8.2,11.5" fill="none" stroke="#9a9a9a" stroke-width="1.3"/></svg>
<svg class="abs" style="left:184px;top:122px" width="10" height="13" viewBox="0 0 10 13"><polyline points="1.8,1.5 8,6.5 1.8,11.5" fill="none" stroke="#9a9a9a" stroke-width="1.3"/></svg>
<div class="t" style="left:210.50px;top:120.51px;font-size:18.3px;color:#3e4a59;font-weight:400;font-style:normal;">May 23, 2023</div>
<div class="abs" style="left:1370px;top:120px;width:31px;height:18px;background:#a8c8f4;border-radius:9px"></div>
<div class="abs" style="left:1372px;top:122px;width:14px;height:14px;background:#f8f9fb;border-radius:50%"></div>
<div class="t" style="left:1406.60px;top:124.15px;font-size:11.4px;color:#444c59;font-weight:400;font-style:normal;">SHOW WEEKEND</div>
<div class="abs" style="left:1576px;top:108px;width:175px;height:42px;border:1px solid #c9c9cc;border-radius:4px;background:#ecedf0;overflow:hidden"></div>
<div class="abs" style="left:1576px;top:108px;width:49px;height:42px;background:#8f9099;border-radius:4px 0 0 4px"></div>
<div class="abs" style="left:1681px;top:109px;width:1px;height:40px;background:#b7b7bb"></div>
<div class="t" style="left:1100.30px;width:1000px;text-align:center;top:124.15px;font-size:11.4px;color:#ffffff;font-weight:400;font-style:normal;">DAY</div>
<div class="t" style="left:1152.80px;width:1000px;text-align:center;top:124.15px;font-size:11.4px;color:#6b6c73;font-weight:400;font-style:normal;">WEEK</div>
<div class="t" style="left:1215.80px;width:1000px;text-align:center;top:124.15px;font-size:11.4px;color:#6b6c73;font-weight:400;font-style:normal;">MONTH</div>
<svg class="abs" style="left:26px;top:182px" width="12" height="10" viewBox="0 0 12 10"><polyline points="5.2,1.3 1.6,5 5.2,8.7" fill="none" stroke="#3e4a59" stroke-width="1.4"/><polyline points="10,1.3 6.4,5 10,8.7" fill="none" stroke="#3e4a59" stroke-width="1.4"/></svg>
<svg class="abs" style="left:48px;top:182px" width="10" height="10" viewBox="0 0 10 10"><polyline points="6.8,1.3 3,5 6.8,8.7" fill="none" stroke="#3e4a59" stroke-width="1.4"/></svg>
<div class="t" style="left:86.50px;top:180.57px;font-size:13.5px;color:#3e4a59;font-weight:400;font-style:normal;">May 2023</div>
<svg class="abs" style="left:175px;top:182px" width="10" height="10" viewBox="0 0 10 10"><polyline points="2.6,1.3 6.4,5 2.6,8.7" fill="none" stroke="#3e4a59" stroke-width="1.4"/></svg>
<svg class="abs" style="left:194px;top:182px" width="12" height="10" viewBox="0 0 12 10"><polyline points="2,1.3 5.6,5 2,8.7" fill="none" stroke="#3e4a59" stroke-width="1.4"/><polyline points="6.8,1.3 10.4,5 6.8,8.7" fill="none" stroke="#3e4a59" stroke-width="1.4"/></svg>
<div class="t" style="left:-464.50px;width:1000px;text-align:center;top:209.42px;font-size:9.9px;color:#3e4a59;font-weight:400;font-style:normal;">S</div>
<div class="t" style="left:-437.60px;width:1000px;text-align:center;top:209.42px;font-size:9.9px;color:#3e4a59;font-weight:400;font-style:normal;">M</div>
<div class="t" style="left:-410.70px;width:1000px;text-align:center;top:209.42px;font-size:9.9px;color:#3e4a59;font-weight:400;font-style:normal;">T</div>
<div class="t" style="left:-383.80px;width:1000px;text-align:center;top:209.42px;font-size:9.9px;color:#3e4a59;font-weight:400;font-style:normal;">W</div>
<div class="t" style="left:-356.90px;width:1000px;text-align:center;top:209.42px;font-size:9.9px;color:#3e4a59;font-weight:400;font-style:normal;">T</div>
<div class="t" style="left:-330.00px;width:1000px;text-align:center;top:209.42px;font-size:9.9px;color:#3e4a59;font-weight:400;font-style:normal;">F</div>
<div class="t" style="left:-303.10px;width:1000px;text-align:center;top:209.42px;font-size:9.9px;color:#3e4a59;font-weight:400;font-style:normal;">S</div>
<div class="abs" style="left:78.2px;top:249.2px;width:21.6px;height:21.6px;border-radius:50%;border:1px solid #fca82c"></div>
<div class="abs" style="left:78px;top:297.8px;width:22px;height:22px;border-radius:50%;background:#5ea1dd"></div>
<div class="t" style="left:-466.10px;width:1000px;text-align:center;top:231.99px;font-size:11px;color:#a9a9a9;font-weight:400;font-style:normal;">30</div>
<div class="t" style="left:-438.70px;width:1000px;text-align:center;top:231.99px;font-size:11px;color:#3e4a59;font-weight:400;font-style:normal;">1</div>
<div class="t" style="left:-411.30px;width:1000px;text-align:center;top:231.99px;font-size:11px;color:#3e4a59;font-weight:400;font-style:normal;">2</div>
<div class="t" style="left:-383.90px;width:1000px;text-align:center;top:231.99px;font-size:11px;color:#3e4a59;font-weight:400;font-style:normal;">3</div>
<div class="t" style="left:-356.50px;width:1000px;text-align:center;top:231.99px;font-size:11px;color:#3e4a59;font-weight:400;font-style:normal;">4</div>
<div class="t" style="left:-329.10px;width:1000px;text-align:center;top:231.99px;font-size:11px;color:#3e4a59;font-weight:400;font-style:normal;">5</div>
<div class="t" style="left:-301.70px;width:1000px;text-align:center;top:231.99px;font-size:11px;color:#3e4a59;font-weight:400;font-style:normal;">6</div>
<div class="t" style="left:-466.10px;width:1000px;text-align:center;top:256.19px;font-size:11px;color:#3e4a59;font-weight:400;font-style:normal;">7</div>
<div class="t" style="left:-438.70px;width:1000px;text-align:center;top:256.19px;font-size:11px;color:#3e4a59;font-weight:400;font-style:normal;">8</div>
<div class="t" style="left:-411.30px;width:1000px;text-align:center;top:256.19px;font-size:11px;color:#3e4a59;font-weight:400;font-style:normal;">9</div>
<div class="t" style="left:-383.90px;width:1000px;text-align:center;top:256.19px;font-size:11px;color:#3e4a59;font-weight:400;font-style:normal;">10</div>
<div class="t" style="left:-356.50px;width:1000px;text-align:center;top:256.19px;font-size:11px;color:#3e4a59;font-weight:400;font-style:normal;">11</div>
<div class="t" style="left:-329.10px;width:1000px;text-align:center;top:256.19px;font-size:11px;color:#3e4a59;font-weight:400;font-style:normal;">12</div>
<div class="t" style="left:-301.70px;width:1000px;text-align:center;top:256.19px;font-size:11px;color:#3e4a59;font-weight:400;font-style:normal;">13</div>
<div class="t" style="left:-466.10px;width:1000px;text-align:center;top:280.39px;font-size:11px;color:#3e4a59;font-weight:400;font-style:normal;">14</div>
<div class="t" style="left:-438.70px;width:1000px;text-align:center;top:280.39px;font-size:11px;color:#3e4a59;font-weight:400;font-style:normal;">15</div>
<div class="t" style="left:-411.30px;width:1000px;text-align:center;top:280.39px;font-size:11px;color:#3e4a59;font-weight:400;font-style:normal;">16</div>
<div class="t" style="left:-383.90px;width:1000px;text-align:center;top:280.39px;font-size:11px;color:#3e4a59;font-weight:400;font-style:normal;">17</div>
<div class="t" style="left:-356.50px;width:1000px;text-align:center;top:280.39px;font-size:11px;color:#3e4a59;font-weight:400;font-style:normal;">18</div>
<div class="t" style="left:-329.10px;width:1000px;text-align:center;top:280.39px;font-size:11px;color:#3e4a59;font-weight:400;font-style:normal;">19</div>
<div class="t" style="left:-301.70px;width:1000px;text-align:center;top:280.39px;font-size:11px;color:#3e4a59;font-weight:400;font-style:normal;">20</div>
<div class="t" style="left:-466.10px;width:1000px;text-align:center;top:304.59px;font-size:11px;color:#3e4a59;font-weight:400;font-style:normal;">21</div>
<div class="t" style="left:-438.70px;width:1000px;text-align:center;top:304.59px;font-size:11px;color:#3e4a59;font-weight:400;font-style:normal;">22</div>
<div class="t" style="left:-411.30px;width:1000px;text-align:center;top:304.59px;font-size:11px;color:#ffffff;font-weight:400;font-style:normal;">23</div>
<div class="t" style="left:-383.90px;width:1000px;text-align:center;top:304.59px;font-size:11px;color:#3e4a59;font-weight:400;font-style:normal;">24</div>
<div class="t" style="left:-356.50px;width:1000px;text-align:center;top:304.59px;font-size:11px;color:#3e4a59;font-weight:400;font-style:normal;">25</div>
<div class="t" style="left:-329.10px;width:1000px;text-align:center;top:304.59px;font-size:11px;color:#3e4a59;font-weight:400;font-style:normal;">26</div>
<div class="t" style="left:-301.70px;width:1000px;text-align:center;top:304.59px;font-size:11px;color:#3e4a59;font-weight:400;font-style:normal;">27</div>
<div class="t" style="left:-466.10px;width:1000px;text-align:center;top:328.79px;font-size:11px;color:#3e4a59;font-weight:400;font-style:normal;">28</div>
<div class="t" style="left:-438.70px;width:1000px;text-align:center;top:328.79px;font-size:11px;color:#3e4a59;font-weight:400;font-style:normal;">29</div>
<div class="t" style="left:-411.30px;width:1000px;text-align:center;top:328.79px;font-size:11px;color:#3e4a59;font-weight:400;font-style:normal;">30</div>
<div class="t" style="left:-383.90px;width:1000px;text-align:center;top:328.79px;font-size:11px;color:#3e4a59;font-weight:400;font-style:normal;">31</div>
<div class="t" style="left:-356.50px;width:1000px;text-align:center;top:328.79px;font-size:11px;color:#a9a9a9;font-weight:400;font-style:normal;">1</div>
<div class="t" style="left:-329.10px;width:1000px;text-align:center;top:328.79px;font-size:11px;color:#a9a9a9;font-weight:400;font-style:normal;">2</div>
<div class="t" style="left:-301.70px;width:1000px;text-align:center;top:328.79px;font-size:11px;color:#a9a9a9;font-weight:400;font-style:normal;">3</div>
<div class="t" style="left:-466.10px;width:1000px;text-align:center;top:352.99px;font-size:11px;color:#a9a9a9;font-weight:400;font-style:normal;">4</div>
<div class="t" style="left:-438.70px;width:1000px;text-align:center;top:352.99px;font-size:11px;color:#a9a9a9;font-weight:400;font-style:normal;">5</div>
<div class="t" style="left:-411.30px;width:1000px;text-align:center;top:352.99px;font-size:11px;color:#a9a9a9;font-weight:400;font-style:normal;">6</div>
<div class="t" style="left:-383.90px;width:1000px;text-align:center;top:352.99px;font-size:11px;color:#a9a9a9;font-weight:400;font-style:normal;">7</div>
<div class="t" style="left:-356.50px;width:1000px;text-align:center;top:352.99px;font-size:11px;color:#a9a9a9;font-weight:400;font-style:normal;">8</div>
<div class="t" style="left:-329.10px;width:1000px;text-align:center;top:352.99px;font-size:11px;color:#a9a9a9;font-weight:400;font-style:normal;">9</div>
<div class="t" style="left:-301.70px;width:1000px;text-align:center;top:352.99px;font-size:11px;color:#a9a9a9;font-weight:400;font-style:normal;">10</div>
<div class="abs" style="left:276px;top:157px;width:1px;height:889px;background:#dddbda"></div>
<div class="abs" style="left:224px;top:239px;width:1533px;height:1px;background:#dddbda"></div>
<div class="t" style="left:-75.00px;width:1000px;text-align:center;top:174.03px;font-size:10.6px;color:#4d4d4d;font-weight:400;font-style:normal;">Mon</div>
<div class="t" style="left:-75.00px;width:1000px;text-align:center;top:199.76px;font-size:23.2px;color:#545454;font-weight:400;font-style:normal;">22</div>
<div class="t" style="left:221.00px;width:1000px;text-align:center;top:174.03px;font-size:10.6px;color:#4d4d4d;font-weight:400;font-style:normal;">Tue</div>
<div class="abs" style="left:700px;top:189px;width:42px;height:42px;border-radius:50%;background:#fea834"></div>
<div class="t" style="left:221.00px;width:1000px;text-align:center;top:199.76px;font-size:23.2px;color:#ffffff;font-weight:400;font-style:normal;">23</div>
<div class="t" style="left:517.00px;width:1000px;text-align:center;top:174.03px;font-size:10.6px;color:#4d4d4d;font-weight:400;font-style:normal;">Wed</div>
<div class="t" style="left:517.00px;width:1000px;text-align:center;top:199.76px;font-size:23.2px;color:#545454;font-weight:400;font-style:normal;">24</div>
<div class="t" style="left:813.00px;width:1000px;text-align:center;top:174.03px;font-size:10.6px;color:#4d4d4d;font-weight:400;font-style:normal;">Thu</div>
<div class="t" style="left:813.00px;width:1000px;text-align:center;top:199.76px;font-size:23.2px;color:#545454;font-weight:400;font-style:normal;">25</div>
<div class="t" style="left:1109.00px;width:1000px;text-align:center;top:174.03px;font-size:10.6px;color:#4d4d4d;font-weight:400;font-style:normal;">Fri</div>
<div class="t" style="left:1109.00px;width:1000px;text-align:center;top:199.76px;font-size:23.2px;color:#545454;font-weight:400;font-style:normal;">26</div>
<div class="abs" style="left:269px;top:263px;width:1488px;height:1px;background:#dddbda"></div>
<div class="abs" style="left:277px;top:298px;width:1480px;height:1px;background:#ececec"></div>
<div class="t" style="left:-733.80px;width:1000px;text-align:right;top:258.90px;font-size:9.8px;color:#6b6b6b;font-weight:400;font-style:normal;letter-spacing:-0.2px;">11:00 AM</div>
<div class="abs" style="left:269px;top:333px;width:1488px;height:1px;background:#dddbda"></div>
<div class="abs" style="left:277px;top:368px;width:1480px;height:1px;background:#ececec"></div>
<div class="t" style="left:-733.80px;width:1000px;text-align:right;top:328.90px;font-size:9.8px;color:#6b6b6b;font-weight:400;font-style:normal;letter-spacing:-0.2px;">12:00 PM</div>
<div class="abs" style="left:269px;top:403px;width:1488px;height:1px;background:#dddbda"></div>
<div class="abs" style="left:277px;top:438px;width:1480px;height:1px;background:#ececec"></div>
<div class="t" style="left:-733.80px;width:1000px;text-align:right;top:398.90px;font-size:9.8px;color:#6b6b6b;font-weight:400;font-style:normal;letter-spacing:-0.2px;">1:00 PM</div>
<div class="abs" style="left:269px;top:473px;width:1488px;height:1px;background:#dddbda"></div>
<div class="abs" style="left:277px;top:508px;width:1480px;height:1px;background:#ececec"></div>
<div class="t" style="left:-733.80px;width:1000px;text-align:right;top:468.90px;font-size:9.8px;color:#6b6b6b;font-weight:400;font-style:normal;letter-spacing:-0.2px;">2:00 PM</div>
<div class="abs" style="left:269px;top:543px;width:1488px;height:1px;background:#dddbda"></div>
<div class="abs" style="left:277px;top:578px;width:1480px;height:1px;background:#ececec"></div>
<div class="t" style="left:-733.80px;width:1000px;text-align:right;top:538.90px;font-size:9.8px;color:#6b6b6b;font-weight:400;font-style:normal;letter-spacing:-0.2px;">3:00 PM</div>
<div class="abs" style="left:269px;top:613px;width:1488px;height:1px;background:#dddbda"></div>
<div class="abs" style="left:277px;top:648px;width:1480px;height:1px;background:#ececec"></div>
<div class="t" style="left:-733.80px;width:1000px;text-align:right;top:608.90px;font-size:9.8px;color:#6b6b6b;font-weight:400;font-style:normal;letter-spacing:-0.2px;">4:00 PM</div>
<div class="abs" style="left:269px;top:683px;width:1488px;height:1px;background:#dddbda"></div>
<div class="abs" style="left:277px;top:718px;width:1480px;height:1px;background:#ececec"></div>
<div class="t" style="left:-733.80px;width:1000px;text-align:right;top:678.90px;font-size:9.8px;color:#6b6b6b;font-weight:400;font-style:normal;letter-spacing:-0.2px;">5:00 PM</div>
<div class="abs" style="left:269px;top:753px;width:1488px;height:1px;background:#dddbda"></div>
<div class="abs" style="left:277px;top:788px;width:1480px;height:1px;background:#ececec"></div>
<div class="t" style="left:-733.80px;width:1000px;text-align:right;top:748.90px;font-size:9.8px;color:#6b6b6b;font-weight:400;font-style:normal;letter-spacing:-0.2px;">6:00 PM</div>
<div class="abs" style="left:269px;top:823px;width:1488px;height:1px;background:#dddbda"></div>
<div class="abs" style="left:277px;top:858px;width:1480px;height:1px;background:#ececec"></div>
<div class="t" style="left:-733.80px;width:1000px;text-align:right;top:818.90px;font-size:9.8px;color:#6b6b6b;font-weight:400;font-style:normal;letter-spacing:-0.2px;">7:00 PM</div>
<div class="abs" style="left:269px;top:893px;width:1488px;height:1px;background:#dddbda"></div>
<div class="abs" style="left:277px;top:928px;width:1480px;height:1px;background:#ececec"></div>
<div class="t" style="left:-733.80px;width:1000px;text-align:right;top:888.90px;font-size:9.8px;color:#6b6b6b;font-weight:400;font-style:normal;letter-spacing:-0.2px;">8:00 PM</div>
<div class="abs" style="left:269px;top:963px;width:1488px;height:1px;background:#dddbda"></div>
<div class="abs" style="left:277px;top:998px;width:1480px;height:1px;background:#ececec"></div>
<div class="t" style="left:-733.80px;width:1000px;text-align:right;top:958.90px;font-size:9.8px;color:#6b6b6b;font-weight:400;font-style:normal;letter-spacing:-0.2px;">9:00 PM</div>
<div class="abs" style="left:269px;top:1033px;width:1488px;height:1px;background:#dddbda"></div>
<div class="abs" style="left:277px;top:1068px;width:1480px;height:1px;background:#ececec"></div>
<div class="t" style="left:-733.80px;width:1000px;text-align:right;top:1028.90px;font-size:9.8px;color:#6b6b6b;font-weight:400;font-style:normal;letter-spacing:-0.2px;">10:00 PM</div>
<div class="abs" style="left:277px;top:404px;width:1476px;height:34px;background:repeating-linear-gradient(45deg,#c3eee7 0px,#c3eee7 0.0px,#ddf6f2 0.0px,#ddf6f2 1.7px,#c3eee7 1.7px,#c3eee7 12px)"></div>
<div class="t" style="left:286.70px;top:407.77px;font-size:13.5px;color:#181818;font-weight:400;font-style:normal;">Unassigned Presentation</div>
<div class="abs" style="left:277px;top:474px;width:1476px;height:34px;background:repeating-linear-gradient(45deg,#c3eee7 0px,#c3eee7 0.0px,#ddf6f2 0.0px,#ddf6f2 1.7px,#c3eee7 1.7px,#c3eee7 12px)"></div>
<div class="t" style="left:286.70px;top:477.77px;font-size:13.5px;color:#181818;font-weight:400;font-style:normal;">Unassigned Presentation</div>
<div class="abs" style="left:814px;top:517px;width:400px;height:172px;background:#f3f3f3;border:1px solid #d8d8d8;border-radius:4px;box-shadow:0 2px 4px rgba(0,0,0,0.18)"></div>
<svg class="abs" style="left:1004px;top:507.2px" width="20" height="11" viewBox="0 0 20 11"><polygon points="1.5,10.5 10,1.5 18.5,10.5" fill="#f3f3f3" stroke="#dcdcdc" stroke-width="1"/><rect x="0" y="9.8" width="20" height="2" fill="#f3f3f3"/></svg>
<div class="abs" style="left:832px;top:531px;width:36px;height:36px;background:#8b7ae8;border-radius:5px"></div>
<svg class="abs" style="left:832px;top:531px" width="36" height="36" viewBox="0 0 36 36"><rect x="6.9" y="7" width="22.2" height="16" rx="2.4" fill="#fff"/><rect x="9.5" y="9.4" width="17" height="9.8" fill="#8b7ae8"/><circle cx="18" cy="21.1" r="0.9" fill="#8b7ae8"/><polygon points="15.2,25.4 20.8,25.4 22,29 14,29" fill="#fff"/></svg>
<div class="t" style="left:878.30px;top:533.99px;font-size:20.1px;color:#3e4a59;font-weight:400;font-style:normal;">Unassigned Presentation</div>
<svg class="abs" style="left:1186px;top:533px" width="14" height="14" viewBox="0 0 14 14"><path d="M1.6,1.6 L11.8,11.8 M11.8,1.6 L1.6,11.8" stroke="#080707" stroke-width="1.7"/></svg>
<div class="t" style="left:834.50px;top:587.78px;font-size:13.25px;color:#3e4a59;font-weight:700;font-style:normal;">Start DateTime</div>
<div class="t" style="left:964.30px;top:588.32px;font-size:13.8px;color:#3e4a59;font-weight:400;font-style:normal;">5/23/2023, 2:00 PM</div>
<div class="abs" style="left:815px;top:638px;width:399px;height:1px;background:#dddbda"></div>
<div class="abs" style="left:837.5px;top:647px;width:79px;height:32px;background:#fff;border:1px solid #c9c9c9;border-radius:4px"></div>
<div class="t" style="left:377.00px;width:1000px;text-align:center;top:656.86px;font-size:13.4px;color:#0176d3;font-weight:400;font-style:normal;">Discard</div>
<div class="abs" style="left:1067px;top:647px;width:124px;height:32px;background:#0176d3;border-radius:4px"></div>
<div class="t" style="left:629.00px;width:1000px;text-align:center;top:656.87px;font-size:13.5px;color:#ffffff;font-weight:400;font-style:normal;">Convert to Call</div>
</body></html>
